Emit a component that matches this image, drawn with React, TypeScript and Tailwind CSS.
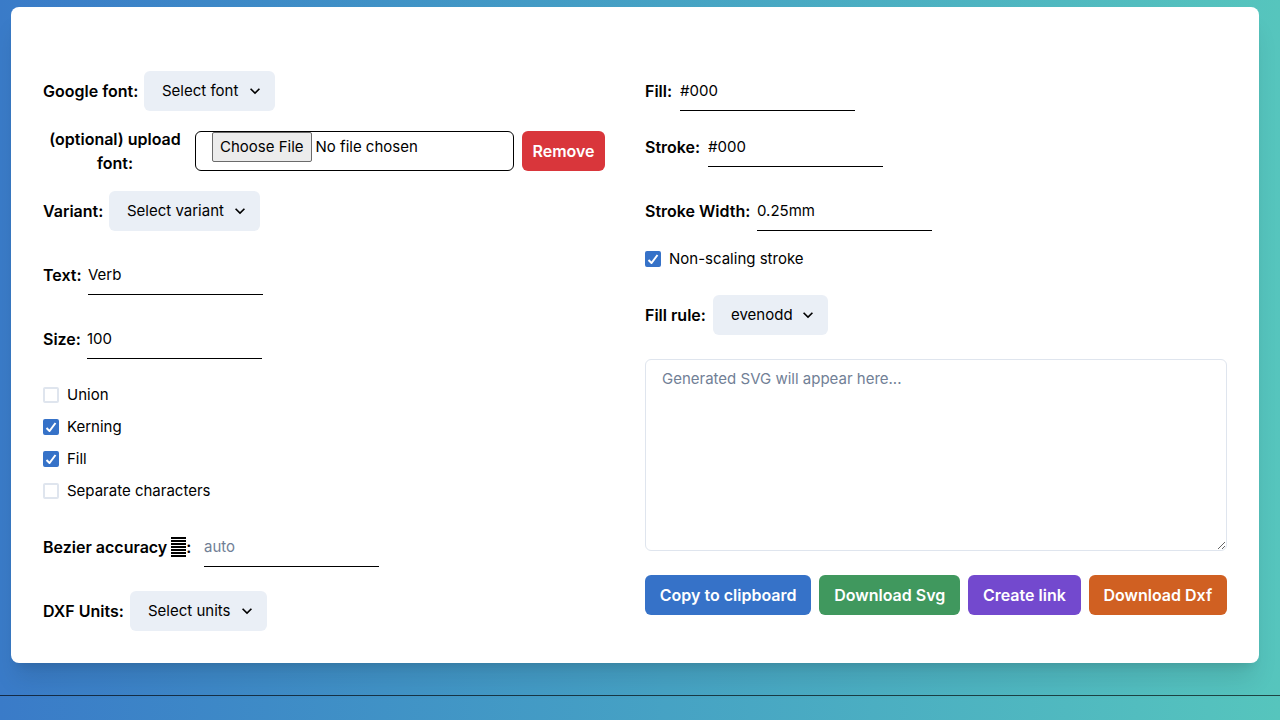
import { useState } from "react";
import type { ReactNode } from "react";
import { MdExpandMore } from "react-icons/md";

function Label({ id, width, children }: { id: string; width: string; children: ReactNode }) {
  return (
    <label htmlFor={id} className={`shrink-0 text-base font-semibold whitespace-nowrap ${width}`}>
      {children}
    </label>
  );
}

function SelectField({
  id,
  label,
  labelWidth,
  width,
  options,
}: {
  id: string;
  label: string;
  labelWidth: string;
  width: string;
  options: string[];
}) {
  return (
    <div className="flex items-center">
      <Label id={id} width={labelWidth}>{label}</Label>
      <div className={`relative ${width}`}>
        <select id={id} className="h-10 w-full appearance-none rounded-md bg-[#eaeff6] pr-7 pl-[18px]">
          {options.map((o) => (
            <option key={o}>{o}</option>
          ))}
        </select>
        <MdExpandMore className="pointer-events-none absolute top-2.5 right-2.5 size-5" />
      </div>
    </div>
  );
}

function TextField({
  id,
  label,
  labelWidth,
  value,
  placeholder,
}: {
  id: string;
  label: ReactNode;
  labelWidth: string;
  value?: string;
  placeholder?: string;
}) {
  return (
    <div className="flex items-center">
      <Label id={id} width={labelWidth}>{label}</Label>
      <input
        id={id}
        type="text"
        defaultValue={value}
        placeholder={placeholder}
        className="h-10 w-[175px] border-b border-black bg-transparent outline-none placeholder:text-[#718096]"
      />
    </div>
  );
}

function CheckField({ label, initial = false }: { label: string; initial?: boolean }) {
  const [on, setOn] = useState(initial);
  return (
    <label className="flex items-center gap-2">
      <span className="relative flex size-4">
        <input
          type="checkbox"
          checked={on}
          onChange={() => setOn(!on)}
          className="size-4 appearance-none rounded-xs border-2 border-[#dfe5ee] checked:border-[#3672c8] checked:bg-[#3672c8]"
        />
        {on && (
          <svg viewBox="0 0 12 10" className="pointer-events-none absolute top-[3px] left-0.5 h-2.5 w-3 fill-none stroke-white stroke-2">
            <polyline points="1.5 6 4.5 9 10.5 1" />
          </svg>
        )}
      </span>
      {label}
    </label>
  );
}

function ActionButton({ color, children }: { color: string; children: ReactNode }) {
  return (
    <button type="button" className={`h-10 grow rounded-md text-base font-semibold whitespace-nowrap text-white ${color}`}>
      {children}
    </button>
  );
}

function LinesGlyph() {
  return (
    <svg viewBox="0 0 15 20" className="inline h-5 w-[15px] align-[-4px]" aria-hidden="true">
      <path d="M0 1h15M0 4h15M0 7h15M0 10h15M0 13h15M0 16h15M0 19h15" stroke="#000" strokeWidth="2" />
    </svg>
  );
}

export default function App() {
  return (
    <div className="min-h-screen bg-linear-to-r from-[#3a7bc8] to-[#56c5bd] font-['Inter',sans-serif] text-[15px] leading-6 text-black">
      <main className="pt-[7px] pr-[21px] pb-8 pl-[11px]">
        <form className="grid grid-cols-2 gap-5 rounded-lg bg-white px-8 pt-16 pb-8 shadow-xl">
          <div className="flex flex-col gap-6 pr-5">
            <div className="flex flex-col gap-5">
              <SelectField id="font" label="Google font:" labelWidth="w-[101px]" width="w-[131px]" options={["Select font"]} />
              <div className="flex items-center gap-2">
                <label htmlFor="upload" className="-my-1 w-36 shrink-0 text-center text-base font-semibold">
                  (optional) upload font:
                </label>
                <input
                  id="upload"
                  type="file"
                  className="h-10 min-w-0 grow rounded-md border border-black px-4 file:mr-1 file:h-[30px] file:rounded-xs file:border file:border-solid file:border-[#6b6b6b] file:bg-[#ececec] file:px-[7px]"
                />
                <button type="button" className="h-10 w-[83px] shrink-0 rounded-md bg-[#d9363b] text-base font-semibold text-white">
                  Remove
                </button>
              </div>
              <SelectField id="variant" label="Variant:" labelWidth="w-[66px]" width="w-[151px]" options={["Select variant"]} />
            </div>
            <TextField id="text" label="Text:" labelWidth="w-[45px]" value="Verb" />
            <TextField id="size" label="Size:" labelWidth="w-11" value="100" />
            <div className="flex flex-col items-start gap-2">
              <CheckField label="Union" />
              <CheckField label="Kerning" initial />
              <CheckField label="Fill" initial />
              <CheckField label="Separate characters" />
            </div>
            <TextField
              id="accuracy"
              label={<>Bezier accuracy <LinesGlyph />:</>}
              labelWidth="w-[161px]"
              placeholder="auto"
            />
            <SelectField id="units" label="DXF Units:" labelWidth="w-[87px]" width="w-[137px]" options={["Select units"]} />
          </div>

          <div className="flex flex-col gap-6">
            <div className="flex flex-col gap-4">
              <TextField id="fill" label="Fill:" labelWidth="w-[35px]" value="#000" />
              <TextField id="stroke" label="Stroke:" labelWidth="w-[63px]" value="#000" />
            </div>
            <div className="flex flex-col items-start gap-4">
              <TextField id="stroke-width" label="Stroke Width:" labelWidth="w-28" value="0.25mm" />
              <CheckField label="Non-scaling stroke" initial />
            </div>
            <SelectField id="fill-rule" label="Fill rule:" labelWidth="w-[68px]" width="w-[115px]" options={["evenodd", "nonzero"]} />
            <textarea
              aria-label="Generated SVG"
              placeholder="Generated SVG will appear here..."
              className="h-48 w-full rounded-md border border-[#dfe5ee] px-4 py-[7px] placeholder:text-[#718096]"
            />
            <div className="flex gap-2">
              <ActionButton color="bg-[#3672c8]">Copy to clipboard</ActionButton>
              <ActionButton color="bg-[#40985e]">Download Svg</ActionButton>
              <ActionButton color="bg-[#7349ce]">Create link</ActionButton>
              <ActionButton color="bg-[#d06022]">Download Dxf</ActionButton>
            </div>
          </div>
        </form>
      </main>
      <hr className="border-black/65" />
    </div>
  );
}
